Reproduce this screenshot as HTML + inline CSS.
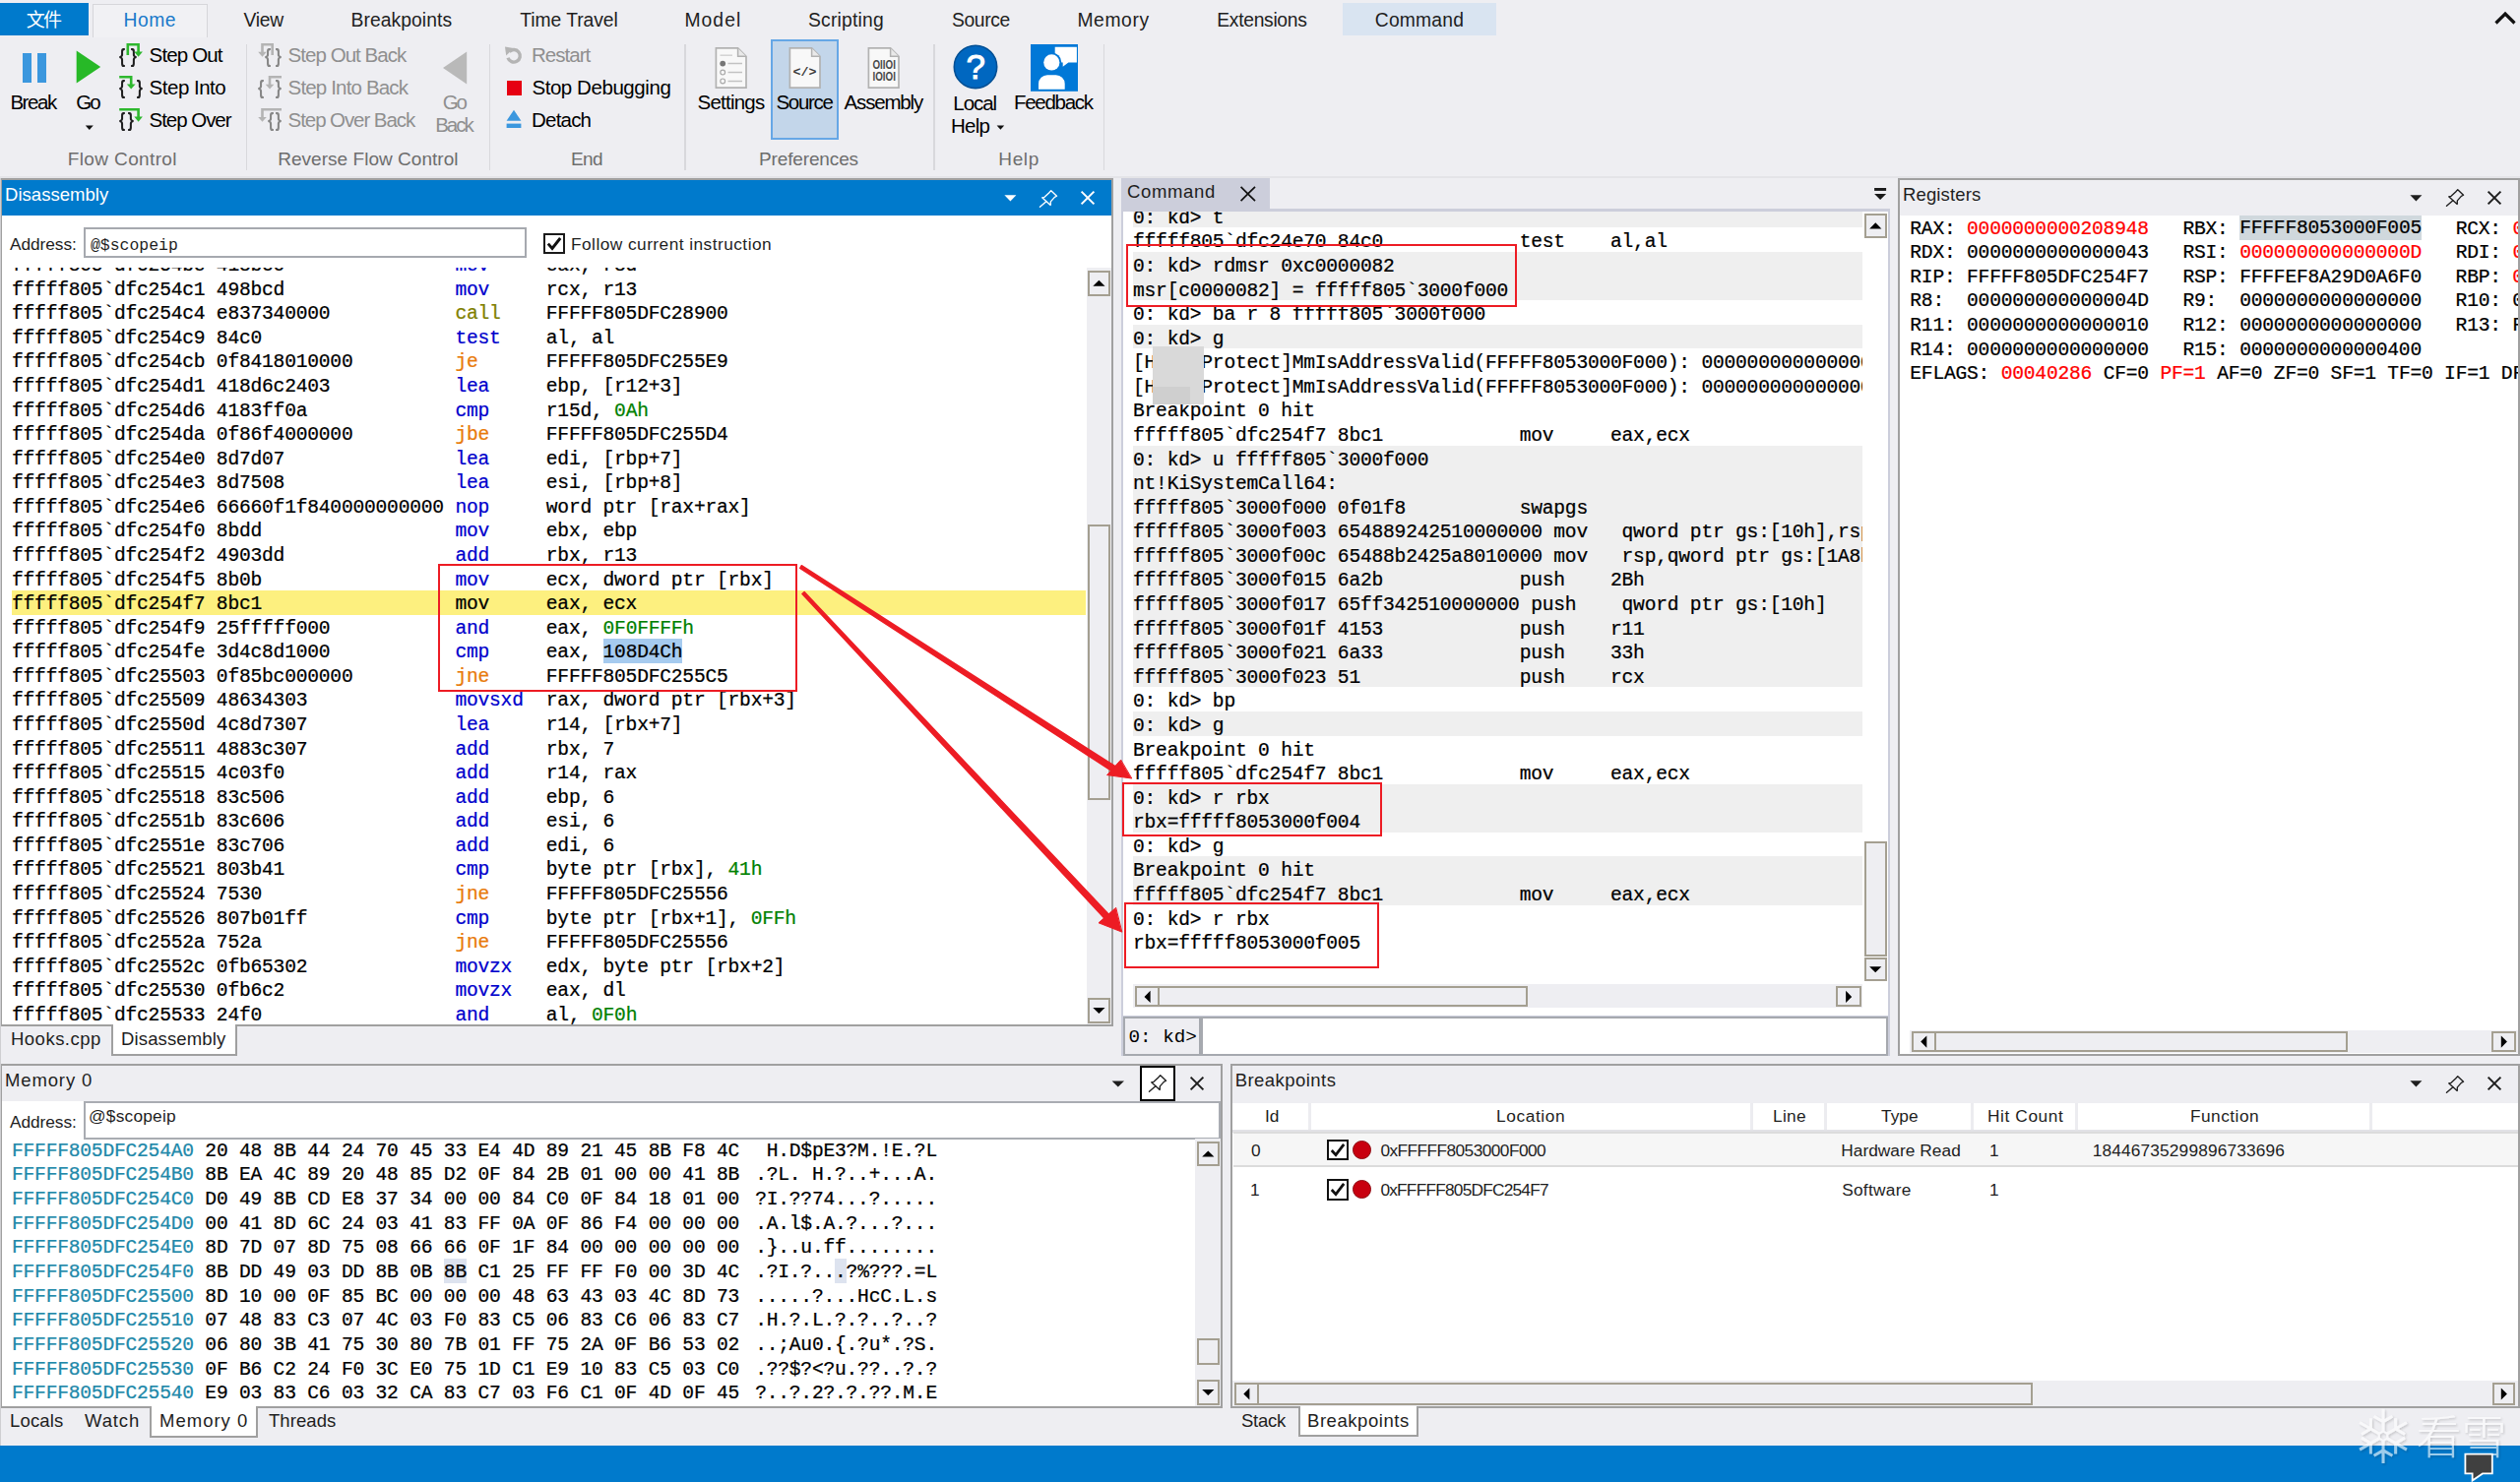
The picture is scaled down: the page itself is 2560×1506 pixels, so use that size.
<!DOCTYPE html>
<html lang="en"><head><meta charset="utf-8"><title>WinDbg</title>
<style>
html,body{margin:0;padding:0;background:#eeeef2;}
#app{position:relative;width:2560px;height:1506px;overflow:hidden;font-family:"Liberation Sans","Noto Sans CJK SC",sans-serif;}
#app div,#app svg{position:absolute;}
.t{white-space:pre;}
.s{font-family:"Liberation Sans","Noto Sans CJK SC",sans-serif;}
.m{font-family:"Liberation Mono",monospace;}
.code{font-family:"Liberation Mono",monospace;font-size:19.6px;letter-spacing:-0.210px;color:#000;-webkit-text-stroke:0.24px currentColor;}
.code .r{left:0;right:0;height:24.57px;line-height:30.97px;white-space:pre;}
.code b{font-weight:400;}
.code i,.code u{font-style:normal;text-decoration:none;}
.b{color:#0000cc;} .c{color:#808000;} .j{color:#e87a0a;} .k{color:#000;}
.code i{color:#008000;}
.code u{background:#a6cbef;padding:3.2px 0 0;}
.dis .r{line-height:28.97px;}
.hl{background:#fdf07f;}
.g{background:#efefef;}
.reg i{color:#ff0000;}
.mem .a{color:#2088a9;}
.mem u{background:#dde3ef;padding:2.7px 0 0;}
.reg u{background:#d0d8dd;}
.mem .asc{position:relative;left:4.5px;}
</style></head>
<body><div id="app">
<div style="left:0.00px;top:0.00px;width:2560.00px;height:1506.00px;background:#eeeef2;"></div>
<div style="left:0.00px;top:3.00px;width:90.00px;height:33.00px;background:#007acc;"></div>
<div class="t s" style="left:26.70px;top:8.12px;font-size:19px;line-height:25px;color:#fff;letter-spacing:-1.700px;">文件</div>
<div style="left:94.00px;top:3.50px;width:116.50px;height:34.20px;background:#f1f1f4;border:1px solid #d6d6da;border-bottom:none;box-sizing:border-box;"></div>
<div style="left:1363.80px;top:3.00px;width:156.00px;height:32.50px;background:#d9e4f1;"></div>
<div class="t s" style="left:125.50px;top:7.71px;font-size:19.3px;line-height:25px;color:#1979ca;letter-spacing:0.530px;">Home</div>
<div class="t s" style="left:247.60px;top:7.71px;font-size:19.3px;line-height:25px;color:#1e1e1e;letter-spacing:-0.273px;">View</div>
<div class="t s" style="left:356.60px;top:7.71px;font-size:19.3px;line-height:25px;color:#1e1e1e;letter-spacing:0.062px;">Breakpoints</div>
<div class="t s" style="left:528.30px;top:7.71px;font-size:19.3px;line-height:25px;color:#1e1e1e;letter-spacing:-0.056px;">Time Travel</div>
<div class="t s" style="left:695.40px;top:7.71px;font-size:19.3px;line-height:25px;color:#1e1e1e;letter-spacing:1.092px;">Model</div>
<div class="t s" style="left:821.00px;top:7.71px;font-size:19.3px;line-height:25px;color:#1e1e1e;letter-spacing:0.213px;">Scripting</div>
<div class="t s" style="left:967.00px;top:7.71px;font-size:19.3px;line-height:25px;color:#1e1e1e;letter-spacing:-0.374px;">Source</div>
<div class="t s" style="left:1094.40px;top:7.71px;font-size:19.3px;line-height:25px;color:#1e1e1e;letter-spacing:0.622px;">Memory</div>
<div class="t s" style="left:1236.30px;top:7.71px;font-size:19.3px;line-height:25px;color:#1e1e1e;letter-spacing:-0.308px;">Extensions</div>
<div class="t s" style="left:1396.80px;top:7.71px;font-size:19.3px;line-height:25px;color:#1e1e1e;letter-spacing:0.197px;">Command</div>
<svg style="left:2532px;top:10px" width="26" height="18" viewBox="0 0 26 18"><path d="M3.5 13.5 L13 4 L22.5 13.5" fill="none" stroke="#111" stroke-width="3.2"/></svg>
<div style="left:22.90px;top:54.00px;width:8.90px;height:29.80px;background:#3b97de;"></div>
<div style="left:38.10px;top:54.00px;width:8.90px;height:29.80px;background:#3b97de;"></div>
<div class="t s" style="left:10.40px;top:90.40px;font-size:20.5px;line-height:27px;color:#000;letter-spacing:-1.451px;">Break</div>
<svg style="left:76px;top:50px" width="30" height="38" viewBox="0 0 30 38"><path d="M1.7 1.4 L26.2 17.9 L1.7 34.4 Z" fill="#27b927"/></svg>
<div class="t s" style="left:77.20px;top:90.40px;font-size:20.5px;line-height:27px;color:#000;letter-spacing:-1.946px;">Go</div>
<svg style="left:86px;top:127px" width="10" height="6"><path d="M0.8 0.5 H8.8 L4.8 5 Z" fill="#111"/></svg>
<div class="t s" style="left:121.30px;top:43.53px;font-size:20.4px;line-height:26px;color:#1e1e1e;font-weight:700;transform:scaleX(.78);transform-origin:-0.00px 50%">{</div>
<div class="t s" style="left:130.70px;top:43.53px;font-size:20.4px;line-height:26px;color:#1e1e1e;font-weight:700;transform:scaleX(.78);transform-origin:8.00px 50%">}</div>
<svg style="left:120px;top:42px" width="28" height="20" viewBox="0 0 28 20"><path d="M9.8 14 V3.3 H20.6 V11" fill="none" stroke="#2eb82e" stroke-width="2.6"/><path d="M16.3 10.6 H24.9 L20.6 15.8 Z" fill="#2eb82e"/></svg>
<div class="t s" style="left:151.60px;top:42.10px;font-size:20.5px;line-height:27px;color:#000;letter-spacing:-0.859px;">Step Out</div>
<div class="t s" style="left:121.30px;top:76.33px;font-size:20.4px;line-height:26px;color:#1e1e1e;font-weight:700;transform:scaleX(.78);transform-origin:-0.00px 50%">{</div>
<div class="t s" style="left:137.00px;top:76.33px;font-size:20.4px;line-height:26px;color:#1e1e1e;font-weight:700;transform:scaleX(.78);transform-origin:8.00px 50%">}</div>
<svg style="left:120px;top:75px" width="28" height="20" viewBox="0 0 28 20"><path d="M1.2 3.3 H13.2 V11" fill="none" stroke="#2eb82e" stroke-width="2.6"/><path d="M8.8 10.4 H17.6 L13.2 15.5 Z" fill="#2eb82e"/></svg>
<div class="t s" style="left:151.60px;top:75.10px;font-size:20.5px;line-height:27px;color:#000;letter-spacing:-0.495px;">Step Into</div>
<div class="t s" style="left:121.30px;top:109.43px;font-size:20.4px;line-height:26px;color:#1e1e1e;font-weight:700;transform:scaleX(.78);transform-origin:-0.00px 50%">{</div>
<div class="t s" style="left:127.60px;top:109.43px;font-size:20.4px;line-height:26px;color:#1e1e1e;font-weight:700;transform:scaleX(.78);transform-origin:8.00px 50%">}</div>
<svg style="left:120px;top:108px" width="28" height="20" viewBox="0 0 28 20"><path d="M1.2 3.3 H20.6 V11" fill="none" stroke="#2eb82e" stroke-width="2.6"/><path d="M16.3 10.6 H24.9 L20.6 15.7 Z" fill="#2eb82e"/></svg>
<div class="t s" style="left:151.60px;top:108.20px;font-size:20.5px;line-height:27px;color:#000;letter-spacing:-1.045px;">Step Over</div>
<div class="t s" style="left:68.80px;top:149.32px;font-size:19px;line-height:25px;color:#6d6d6d;letter-spacing:0.371px;">Flow Control</div>
<div style="left:249.60px;top:44.50px;width:1.30px;height:128.00px;background:#d8d8dc;"></div>
<div class="t s" style="left:268.60px;top:43.53px;font-size:20.4px;line-height:26px;color:#868686;font-weight:700;transform:scaleX(.78);transform-origin:-0.00px 50%">{</div>
<div class="t s" style="left:277.80px;top:43.53px;font-size:20.4px;line-height:26px;color:#868686;font-weight:700;transform:scaleX(.78);transform-origin:8.00px 50%">}</div>
<svg style="left:261px;top:42px" width="28" height="20" viewBox="0 0 28 20"><path d="M15.7 14 V3.3 H5.5 V11" fill="none" stroke="#b4b4b4" stroke-width="2.6"/><path d="M1.2 10.8 H9.8 L5.5 15.8 Z" fill="#b4b4b4"/></svg>
<div class="t s" style="left:292.60px;top:42.10px;font-size:20.5px;line-height:27px;color:#8f8f8f;letter-spacing:-0.961px;">Step Out Back</div>
<div class="t s" style="left:262.20px;top:76.33px;font-size:20.4px;line-height:26px;color:#868686;font-weight:700;transform:scaleX(.78);transform-origin:-0.00px 50%">{</div>
<div class="t s" style="left:277.80px;top:76.33px;font-size:20.4px;line-height:26px;color:#868686;font-weight:700;transform:scaleX(.78);transform-origin:8.00px 50%">}</div>
<svg style="left:261px;top:75px" width="28" height="20" viewBox="0 0 28 20"><path d="M25 3.3 H13 V11" fill="none" stroke="#b4b4b4" stroke-width="2.6"/><path d="M8.7 10.8 H17.4 L13 15.6 Z" fill="#b4b4b4"/></svg>
<div class="t s" style="left:292.60px;top:75.10px;font-size:20.5px;line-height:27px;color:#8f8f8f;letter-spacing:-0.845px;">Step Into Back</div>
<div class="t s" style="left:272.00px;top:109.43px;font-size:20.4px;line-height:26px;color:#868686;font-weight:700;transform:scaleX(.78);transform-origin:-0.00px 50%">{</div>
<div class="t s" style="left:277.80px;top:109.43px;font-size:20.4px;line-height:26px;color:#868686;font-weight:700;transform:scaleX(.78);transform-origin:8.00px 50%">}</div>
<svg style="left:261px;top:108px" width="28" height="20" viewBox="0 0 28 20"><path d="M25 3.3 H5.5 V11" fill="none" stroke="#b4b4b4" stroke-width="2.6"/><path d="M1.2 11 H9.8 L5.5 15.8 Z" fill="#b4b4b4"/></svg>
<div class="t s" style="left:292.60px;top:108.20px;font-size:20.5px;line-height:27px;color:#8f8f8f;letter-spacing:-1.078px;">Step Over Back</div>
<svg style="left:448px;top:50px" width="30" height="38" viewBox="0 0 30 38"><path d="M26.2 2.6 L2 19 L26.2 35.6 Z" fill="#b9b9b9"/></svg>
<div class="t s" style="left:449.80px;top:90.40px;font-size:20.5px;line-height:27px;color:#8f8f8f;letter-spacing:-2.346px;">Go</div>
<div class="t s" style="left:442.20px;top:113.20px;font-size:20.5px;line-height:27px;color:#8f8f8f;letter-spacing:-2.008px;">Back</div>
<div class="t s" style="left:282.20px;top:149.32px;font-size:19px;line-height:25px;color:#6d6d6d;letter-spacing:0.034px;">Reverse Flow Control</div>
<div style="left:497.20px;top:44.50px;width:1.30px;height:128.00px;background:#d8d8dc;"></div>
<svg style="left:511px;top:45px" width="22" height="22" viewBox="0 0 22 22"><path d="M6.3 7.6 A6.3 6.3 0 1 1 5 13.8" fill="none" stroke="#b4b4b4" stroke-width="3.4"/><path d="M2 2.6 L10.8 4 L3.2 11.4 Z" fill="#b4b4b4"/></svg>
<div class="t s" style="left:540.00px;top:42.10px;font-size:20.5px;line-height:27px;color:#8f8f8f;letter-spacing:-0.963px;">Restart</div>
<div style="left:514.60px;top:81.60px;width:15.00px;height:15.20px;background:#e60012;"></div>
<div class="t s" style="left:540.40px;top:75.10px;font-size:20.5px;line-height:27px;color:#000;letter-spacing:-0.433px;">Stop Debugging</div>
<svg style="left:513px;top:110px" width="18" height="22" viewBox="0 0 18 22"><path d="M9 1.8 L16.4 12.8 H1.6 Z" fill="#3b97de"/><rect x="1.6" y="15.6" width="14.8" height="4.4" fill="#3b97de"/></svg>
<div class="t s" style="left:540.00px;top:108.20px;font-size:20.5px;line-height:27px;color:#000;letter-spacing:-0.790px;">Detach</div>
<div class="t s" style="left:580.00px;top:149.32px;font-size:19px;line-height:25px;color:#6d6d6d;letter-spacing:-0.620px;">End</div>
<div style="left:695.30px;top:44.50px;width:1.30px;height:128.00px;background:#d8d8dc;"></div>
<div style="left:783.00px;top:40.10px;width:69.00px;height:101.60px;background:#c3d6ea;border:2px solid #66a7e6;box-sizing:border-box;"></div>
<svg style="left:725.6px;top:47px" width="34" height="44" viewBox="0 0 34 44"><path d="M1.4 1.9 H23.6 L32 10.3 V42.2 H1.4 Z" fill="#f8f8f8" stroke="#b2b2b2" stroke-width="1.7"/><path d="M23.6 1.9 V10.3 H32" fill="#e9e9e9" stroke="#b2b2b2" stroke-width="1.5"/><path d="M5.5 9.2 H18" stroke="#d0d0d0" stroke-width="1.4"/><circle cx="8.2" cy="17.6" r="2.9" fill="#777"/><circle cx="8.2" cy="26.6" r="2.4" fill="none" stroke="#aaa" stroke-width="1.2"/><circle cx="8.2" cy="35.4" r="2.4" fill="none" stroke="#aaa" stroke-width="1.2"/><path d="M13.5 17.6 H28 M13.5 26.6 H28 M13.5 35.4 H28" stroke="#c2c2c2" stroke-width="1.5"/></svg>
<div class="t s" style="left:708.60px;top:90.40px;font-size:20.5px;line-height:27px;color:#000;letter-spacing:-0.775px;">Settings</div>
<svg style="left:801px;top:47px" width="34" height="44" viewBox="0 0 34 44"><path d="M1.4 1.9 H23.6 L32 10.3 V42.2 H1.4 Z" fill="#f8f8f8" stroke="#b2b2b2" stroke-width="1.7"/><path d="M23.6 1.9 V10.3 H32" fill="#e9e9e9" stroke="#b2b2b2" stroke-width="1.5"/><text x="16.6" y="29.5" font-size="12.8" font-weight="700" text-anchor="middle" fill="#3c3c3c" font-family="Liberation Mono,monospace" textLength="24" lengthAdjust="spacingAndGlyphs">&lt;/&gt;</text></svg>
<div class="t s" style="left:788.50px;top:90.40px;font-size:20.5px;line-height:27px;color:#000;letter-spacing:-1.330px;">Source</div>
<svg style="left:880.6px;top:47px" width="34" height="44" viewBox="0 0 34 44"><path d="M1.4 1.9 H23.6 L32 10.3 V42.2 H1.4 Z" fill="#f8f8f8" stroke="#b2b2b2" stroke-width="1.7"/><path d="M23.6 1.9 V10.3 H32" fill="#e9e9e9" stroke="#b2b2b2" stroke-width="1.5"/><text x="17.2" y="22.6" font-size="12" font-weight="700" text-anchor="middle" fill="#4a4a4a" font-family="Liberation Sans,sans-serif" textLength="23.4" lengthAdjust="spacingAndGlyphs">OIIOI</text><text x="17.2" y="34.8" font-size="12" font-weight="700" text-anchor="middle" fill="#4a4a4a" font-family="Liberation Sans,sans-serif" textLength="23.4" lengthAdjust="spacingAndGlyphs">IOIOI</text></svg>
<div class="t s" style="left:857.60px;top:90.40px;font-size:20.5px;line-height:27px;color:#000;letter-spacing:-1.187px;">Assembly</div>
<div class="t s" style="left:771.00px;top:149.32px;font-size:19px;line-height:25px;color:#6d6d6d;letter-spacing:-0.134px;">Preferences</div>
<div style="left:948.40px;top:44.50px;width:1.30px;height:128.00px;background:#d8d8dc;"></div>
<svg style="left:967px;top:44px" width="48" height="48" viewBox="0 0 48 48"><circle cx="24" cy="23.9" r="21.7" fill="#0067c0" stroke="#004f94" stroke-width="1.6"/><text x="24.3" y="36.4" font-size="35" text-anchor="middle" fill="#fff" stroke="#fff" stroke-width=".9" font-family="Liberation Sans,sans-serif">?</text></svg>
<div class="t s" style="left:968.30px;top:91.10px;font-size:20.5px;line-height:27px;color:#000;letter-spacing:-1.063px;">Local</div>
<div class="t s" style="left:966.00px;top:113.90px;font-size:20.5px;line-height:27px;color:#000;letter-spacing:-0.720px;">Help</div>
<svg style="left:1011.5px;top:127px" width="10" height="6"><path d="M0.6 0.5 H8.2 L4.4 4.8 Z" fill="#111"/></svg>
<svg style="left:1047px;top:45.2px" width="48" height="48" viewBox="0 0 48 48"><rect width="48" height="47.8" fill="#0078d7"/><path d="M24.7 2.7 H46.9 V18.4 H38.4 L32.7 22.8 V18.4 H24.7 Z" fill="#fff"/><circle cx="21.3" cy="18.4" r="10" fill="#0078d7"/><circle cx="21.3" cy="18.4" r="8.1" fill="#fff"/><path d="M8 45.7 V40 A9 9 0 0 1 17 31.2 H25.7 A9 9 0 0 1 34.7 40 V45.7 Z" fill="#fff"/></svg>
<div class="t s" style="left:1030.00px;top:90.40px;font-size:20.5px;line-height:27px;color:#000;letter-spacing:-1.283px;">Feedback</div>
<div class="t s" style="left:1014.30px;top:149.32px;font-size:19px;line-height:25px;color:#6d6d6d;letter-spacing:0.630px;">Help</div>
<div style="left:1121.10px;top:44.50px;width:1.30px;height:128.00px;background:#d8d8dc;"></div>
<div style="left:0.00px;top:179.40px;width:2560.00px;height:2.00px;background:#e4e4e8;"></div>
<div style="left:0.00px;top:181.30px;width:1.00px;height:1288.00px;background:#cfcfd2;"></div>
<div style="left:1.00px;top:181.30px;width:1130.00px;height:862.00px;background:#a0a0a0;"></div>
<div style="left:2.00px;top:183.00px;width:1127.00px;height:858.30px;background:#fff;"></div>
<div style="left:2.00px;top:183.00px;width:1127.30px;height:35.80px;background:#007acc;"></div>
<div class="t s" style="left:5.00px;top:185.59px;font-size:18.5px;line-height:24px;color:#fff;letter-spacing:0.039px;">Disassembly</div>
<svg style="left:1018.5px;top:197px" width="16" height="10"><path d="M1.4 1.2 H13.4 L7.4 7.4 Z" fill="#fff"/></svg>
<svg style="left:1052.90px;top:189.75px" width="24" height="24" viewBox="-12 -12 24 24"><g fill="none" stroke="#fff" stroke-width="1.35" stroke-linejoin="round" stroke-linecap="round"><path d="M2.75 -8.35 L8.55 -2.75 L6.35 -1.65 L2.35 2.85 L2.15 6.45 L-6.35 -1.15 L-3.95 -1.65 L0.65 -5.95 Z"/><path d="M-2.15 2.65 L-8.55 8.35"/></g></svg>
<svg style="left:1096.6px;top:193px" width="16" height="16"><path d="M1.6 1.6 L14.4 14.4 M14.4 1.6 L1.6 14.4" stroke="#fff" stroke-width="2" fill="none"/></svg>
<div class="t s" style="left:10.00px;top:236.81px;font-size:17.3px;line-height:22px;color:#1e1e1e;letter-spacing:-0.057px;">Address:</div>
<div style="left:85.00px;top:231.20px;width:450.00px;height:30.80px;background:#fff;border:2px solid #a6a9af;box-sizing:border-box;"></div>
<div class="t m" style="left:92.00px;top:238.72px;font-size:16.45px;line-height:21px;color:#1e1e1e;">@$scopeip</div>
<div style="left:552.20px;top:237.30px;width:21.60px;height:20.60px;background:#fff;border:2px solid #1a1a1a;box-sizing:border-box;"><svg style="left:-2px;top:-2px" width="21.6" height="20.6"><path d="M4.8 10.6 L9 15.4 L17.2 5" fill="none" stroke="#111" stroke-width="2.9"/></svg></div>
<div class="t s" style="left:580.00px;top:236.81px;font-size:17.3px;line-height:22px;color:#1e1e1e;letter-spacing:0.461px;">Follow current instruction</div>
<div style="left:2.00px;top:272.00px;width:1101.50px;height:769.30px;background:#fff;overflow:hidden;"><div class="code dis" style="left:10.0px;top:0;width:1091.4px"><div class="r" style="top:-15.87px">fffff805`dfc254be 418bc0               <b class="b">mov     </b>eax, r8d</div><div class="r" style="top:8.70px">fffff805`dfc254c1 498bcd               <b class="b">mov     </b>rcx, r13</div><div class="r" style="top:33.27px">fffff805`dfc254c4 e837340000           <b class="c">call    </b>FFFFF805DFC28900</div><div class="r" style="top:57.84px">fffff805`dfc254c9 84c0                 <b class="b">test    </b>al, al</div><div class="r" style="top:82.41px">fffff805`dfc254cb 0f8418010000         <b class="j">je      </b>FFFFF805DFC255E9</div><div class="r" style="top:106.98px">fffff805`dfc254d1 418d6c2403           <b class="b">lea     </b>ebp, [r12+3]</div><div class="r" style="top:131.55px">fffff805`dfc254d6 4183ff0a             <b class="b">cmp     </b>r15d, <i>0Ah</i></div><div class="r" style="top:156.12px">fffff805`dfc254da 0f86f4000000         <b class="j">jbe     </b>FFFFF805DFC255D4</div><div class="r" style="top:180.69px">fffff805`dfc254e0 8d7d07               <b class="b">lea     </b>edi, [rbp+7]</div><div class="r" style="top:205.26px">fffff805`dfc254e3 8d7508               <b class="b">lea     </b>esi, [rbp+8]</div><div class="r" style="top:229.83px">fffff805`dfc254e6 66660f1f840000000000 <b class="b">nop     </b>word ptr [rax+rax]</div><div class="r" style="top:254.40px">fffff805`dfc254f0 8bdd                 <b class="b">mov     </b>ebx, ebp</div><div class="r" style="top:278.97px">fffff805`dfc254f2 4903dd               <b class="b">add     </b>rbx, r13</div><div class="r" style="top:303.54px">fffff805`dfc254f5 8b0b                 <b class="b">mov     </b>ecx, dword ptr [rbx]</div><div class="r hl" style="top:328.11px">fffff805`dfc254f7 8bc1                 <b class="k">mov     </b>eax, ecx</div><div class="r" style="top:352.68px">fffff805`dfc254f9 25fffff000           <b class="b">and     </b>eax, <i>0F0FFFFh</i></div><div class="r" style="top:377.25px">fffff805`dfc254fe 3d4c8d1000           <b class="b">cmp     </b>eax, <u>108D4Ch</u></div><div class="r" style="top:401.82px">fffff805`dfc25503 0f85bc000000         <b class="j">jne     </b>FFFFF805DFC255C5</div><div class="r" style="top:426.39px">fffff805`dfc25509 48634303             <b class="b">movsxd  </b>rax, dword ptr [rbx+3]</div><div class="r" style="top:450.96px">fffff805`dfc2550d 4c8d7307             <b class="b">lea     </b>r14, [rbx+7]</div><div class="r" style="top:475.53px">fffff805`dfc25511 4883c307             <b class="b">add     </b>rbx, 7</div><div class="r" style="top:500.10px">fffff805`dfc25515 4c03f0               <b class="b">add     </b>r14, rax</div><div class="r" style="top:524.67px">fffff805`dfc25518 83c506               <b class="b">add     </b>ebp, 6</div><div class="r" style="top:549.24px">fffff805`dfc2551b 83c606               <b class="b">add     </b>esi, 6</div><div class="r" style="top:573.81px">fffff805`dfc2551e 83c706               <b class="b">add     </b>edi, 6</div><div class="r" style="top:598.38px">fffff805`dfc25521 803b41               <b class="b">cmp     </b>byte ptr [rbx], <i>41h</i></div><div class="r" style="top:622.95px">fffff805`dfc25524 7530                 <b class="j">jne     </b>FFFFF805DFC25556</div><div class="r" style="top:647.52px">fffff805`dfc25526 807b01ff             <b class="b">cmp     </b>byte ptr [rbx+1], <i>0FFh</i></div><div class="r" style="top:672.09px">fffff805`dfc2552a 752a                 <b class="j">jne     </b>FFFFF805DFC25556</div><div class="r" style="top:696.66px">fffff805`dfc2552c 0fb65302             <b class="b">movzx   </b>edx, byte ptr [rbx+2]</div><div class="r" style="top:721.23px">fffff805`dfc25530 0fb6c2               <b class="b">movzx   </b>eax, dl</div><div class="r" style="top:745.80px">fffff805`dfc25533 24f0                 <b class="b">and     </b>al, <i>0F0h</i></div></div></div>
<div style="left:1103.50px;top:272.00px;width:25.80px;height:769.30px;background:#eeeef2;"></div>
<div style="left:1105.00px;top:275.30px;width:22.80px;height:25.50px;background:#eeeef2;border:2px solid #a49f91;box-sizing:border-box;"><svg style="left:-2px;top:-2px" width="22.8" height="25.5"><path d="M5.300000000000001 15.75 H17.5 L11.4 9.65 Z" fill="#000"/></svg></div>
<div style="left:1105.00px;top:533.00px;width:22.60px;height:280.00px;background:#eeeef2;border:2px solid #a49f91;box-sizing:border-box;"></div>
<div style="left:1105.00px;top:1014.00px;width:22.80px;height:26.00px;background:#eeeef2;border:2px solid #a49f91;box-sizing:border-box;"><svg style="left:-2px;top:-2px" width="22.8" height="26"><path d="M5.300000000000001 10.0 H17.5 L11.4 16.1 Z" fill="#000"/></svg></div>
<div class="t s" style="left:11.00px;top:1043.59px;font-size:18.5px;line-height:24px;color:#1e1e1e;letter-spacing:0.485px;">Hooks.cpp</div>
<div style="left:113.00px;top:1041.00px;width:128.00px;height:32.30px;background:#fff;border:2px solid #a0a0a0;border-top:none;box-sizing:border-box;"></div>
<div class="t s" style="left:123.00px;top:1043.59px;font-size:18.5px;line-height:24px;color:#1e1e1e;letter-spacing:0.139px;">Disassembly</div>
<div style="left:1139.00px;top:181.30px;width:151.00px;height:30.50px;background:#cccedb;"></div>
<div style="left:1139.00px;top:211.70px;width:781.00px;height:3.00px;background:#cccedb;"></div>
<div style="left:1139.00px;top:214.70px;width:781.00px;height:858.50px;background:#cccedb;"></div>
<div style="left:1141.00px;top:214.70px;width:777.00px;height:817.50px;background:#fff;"></div>
<div class="t s" style="left:1145.00px;top:183.39px;font-size:18.5px;line-height:24px;color:#1e1e1e;letter-spacing:0.659px;">Command</div>
<svg style="left:1259px;top:188px" width="18" height="18"><path d="M1.6 1.8 L16 16.2 M16 1.8 L1.6 16.2" stroke="#111" stroke-width="1.7" fill="none"/></svg>
<svg style="left:1903px;top:190px" width="16" height="14"><rect x="1.1" y="1" width="12" height="2.9" fill="#1a1a1a"/><path d="M1.1 7.1 H13.1 L7.1 13 Z" fill="#1a1a1a"/></svg>
<div style="left:1151.00px;top:214.70px;width:741.00px;height:785.00px;background:#fff;overflow:hidden;"><div class="code" style="left:0;top:0;width:741px"><div class="r g" style="top:-7.90px">0: kd&gt; t</div><div class="r" style="top:16.68px">fffff805`dfc24e70 84c0            test    al,al</div><div class="r g" style="top:41.26px">0: kd&gt; rdmsr 0xc0000082</div><div class="r g" style="top:65.84px">msr[c0000082] = fffff805`3000f000</div><div class="r" style="top:90.42px">0: kd&gt; ba r 8 fffff805`3000f000</div><div class="r g" style="top:115.00px">0: kd&gt; g</div><div class="r" style="top:139.58px">[H    Protect]MmIsAddressValid(FFFFF8053000F000): 0000000000000001</div><div class="r" style="top:164.16px">[H    Protect]MmIsAddressValid(FFFFF8053000F000): 0000000000000001</div><div class="r" style="top:188.74px">Breakpoint 0 hit</div><div class="r" style="top:213.32px">fffff805`dfc254f7 8bc1            mov     eax,ecx</div><div class="r g" style="top:237.90px">0: kd&gt; u fffff805`3000f000</div><div class="r g" style="top:262.48px">nt!KiSystemCall64:</div><div class="r g" style="top:287.06px">fffff805`3000f000 0f01f8          swapgs</div><div class="r g" style="top:311.64px">fffff805`3000f003 654889242510000000 mov   qword ptr gs:[10h],rsp</div><div class="r g" style="top:336.22px">fffff805`3000f00c 65488b2425a8010000 mov   rsp,qword ptr gs:[1A8h]</div><div class="r g" style="top:360.80px">fffff805`3000f015 6a2b            push    2Bh</div><div class="r g" style="top:385.38px">fffff805`3000f017 65ff342510000000 push    qword ptr gs:[10h]</div><div class="r g" style="top:409.96px">fffff805`3000f01f 4153            push    r11</div><div class="r g" style="top:434.54px">fffff805`3000f021 6a33            push    33h</div><div class="r g" style="top:459.12px">fffff805`3000f023 51              push    rcx</div><div class="r" style="top:483.70px">0: kd&gt; bp</div><div class="r g" style="top:508.28px">0: kd&gt; g</div><div class="r" style="top:532.86px">Breakpoint 0 hit</div><div class="r" style="top:557.44px">fffff805`dfc254f7 8bc1            mov     eax,ecx</div><div class="r g" style="top:582.02px">0: kd&gt; r rbx</div><div class="r g" style="top:606.60px">rbx=fffff8053000f004</div><div class="r" style="top:631.18px">0: kd&gt; g</div><div class="r g" style="top:655.76px">Breakpoint 0 hit</div><div class="r g" style="top:680.34px">fffff805`dfc254f7 8bc1            mov     eax,ecx</div><div class="r" style="top:704.92px">0: kd&gt; r rbx</div><div class="r" style="top:729.50px">rbx=fffff8053000f005</div></div></div>
<div style="left:1171.30px;top:352.40px;width:51.40px;height:58.60px;background:#d9d9d9;"></div>
<div style="left:1171.30px;top:392.70px;width:37.70px;height:18.30px;background:#cfcfcf;"></div>
<div style="left:1892.00px;top:214.70px;width:25.00px;height:785.00px;background:#fff;"></div>
<div style="left:1894.40px;top:217.00px;width:22.60px;height:24.80px;background:#eeeef2;border:2px solid #a49f91;box-sizing:border-box;"><svg style="left:-2px;top:-2px" width="22.6" height="24.8"><path d="M5.200000000000001 15.4 H17.4 L11.3 9.3 Z" fill="#000"/></svg></div>
<div style="left:1894.40px;top:854.60px;width:22.40px;height:117.60px;background:#eeeef2;border:2px solid #a49f91;box-sizing:border-box;"></div>
<div style="left:1894.40px;top:972.60px;width:22.40px;height:24.40px;background:#eeeef2;border:2px solid #a49f91;box-sizing:border-box;"><svg style="left:-2px;top:-2px" width="22.4" height="24.4"><path d="M5.1 9.2 H17.299999999999997 L11.2 15.299999999999999 Z" fill="#000"/></svg></div>
<div style="left:1151.00px;top:999.70px;width:741.00px;height:24.70px;background:#eeeef2;"></div>
<div style="left:1153.00px;top:1001.60px;width:25.40px;height:21.80px;background:#eeeef2;border:2px solid #a49f91;box-sizing:border-box;"><svg style="left:-2px;top:-2px" width="25.4" height="21.8"><path d="M15.6 4.800000000000001 V17.0 L9.5 10.9 Z" fill="#000"/></svg></div>
<div style="left:1176.40px;top:1001.60px;width:375.40px;height:21.80px;background:#eeeef2;border:2px solid #a49f91;box-sizing:border-box;"></div>
<div style="left:1865.00px;top:1001.60px;width:26.00px;height:21.80px;background:#eeeef2;border:2px solid #a49f91;box-sizing:border-box;"><svg style="left:-2px;top:-2px" width="26" height="21.8"><path d="M10.1 4.800000000000001 V17.0 L16.2 10.9 Z" fill="#000"/></svg></div>
<div style="left:1141.00px;top:1033.00px;width:777.20px;height:39.70px;background:#a6a9af;"></div>
<div style="left:1143.00px;top:1035.20px;width:75.30px;height:35.60px;background:#eeeef2;"></div>
<div style="left:1221.90px;top:1035.20px;width:694.20px;height:35.60px;background:#fff;"></div>
<div class="t m" style="left:1146.50px;top:1042.38px;font-size:19.25px;line-height:25px;color:#000;">0: kd&gt;</div>
<div style="left:445.10px;top:573.00px;width:365.10px;height:129.90px;border:2px solid #ed1c24;box-sizing:border-box;"></div>
<div style="left:1144.20px;top:247.60px;width:396.60px;height:64.00px;border:2px solid #ed1c24;box-sizing:border-box;"></div>
<div style="left:1140.10px;top:795.10px;width:263.80px;height:54.80px;border:2px solid #ed1c24;box-sizing:border-box;"></div>
<div style="left:1142.10px;top:917.40px;width:259.20px;height:66.50px;border:2px solid #ed1c24;box-sizing:border-box;"></div>
<svg style="left:0;top:0" width="2560" height="1506" viewBox="0 0 2560 1506"><g stroke="#ed1c24" stroke-linecap="round" fill="#ed1c24"><path d="M814.3 574.7 L812.7 577.3 L1132 785.2 L1135.2 780.2 Z" stroke-width="1.4" stroke-linejoin="round"/><path d="M1149.4 791 L1124.6 787.6 L1138.4 772.4 Z" stroke-width="1"/><path d="M817.1 601.5 L814.9 603.5 L1123.2 934.6 L1127.6 930.4 Z" stroke-width="1.4" stroke-linejoin="round"/><path d="M1139.5 947 L1116 937.8 L1133.4 922.6 Z" stroke-width="1"/></g></svg>
<div style="left:1927.50px;top:181.30px;width:632.50px;height:892.00px;background:#a0a0a0;"></div>
<div style="left:1929.50px;top:183.00px;width:628.50px;height:888.30px;background:#fff;"></div>
<div style="left:1929.50px;top:183.00px;width:628.50px;height:35.80px;background:#eeeef2;"></div>
<div class="t s" style="left:1933.00px;top:185.59px;font-size:18.5px;line-height:24px;color:#1e1e1e;letter-spacing:0.139px;">Registers</div>
<svg style="left:2446.8px;top:196.6px" width="16" height="10"><path d="M1.4 1.2 H13.4 L7.4 7.4 Z" fill="#1e1e1e"/></svg>
<svg style="left:2481.90px;top:189.35px" width="24" height="24" viewBox="-12 -12 24 24"><g fill="none" stroke="#1e1e1e" stroke-width="1.35" stroke-linejoin="round" stroke-linecap="round"><path d="M2.75 -8.35 L8.55 -2.75 L6.35 -1.65 L2.35 2.85 L2.15 6.45 L-6.35 -1.15 L-3.95 -1.65 L0.65 -5.95 Z"/><path d="M-2.15 2.65 L-8.55 8.35"/></g></svg>
<svg style="left:2525.8px;top:192.6px" width="16" height="16"><path d="M1.6 1.6 L14.4 14.4 M14.4 1.6 L1.6 14.4" stroke="#1e1e1e" stroke-width="2" fill="none"/></svg>
<div style="left:1929.50px;top:218.80px;width:628.50px;height:828.00px;background:#fff;overflow:hidden;"><div class="code reg" style="left:10.8px;top:0;width:800px"><div class="r" style="top:-1.30px">RAX: <i>0000000000208948</i>   RBX: <u>FFFFF8053000F005</u>   RCX: <i>00000000C0000082</i></div><div class="r" style="top:23.33px">RDX: 0000000000000043   RSI: <i>000000000000000D</i>   RDI: <i>0000000000000007</i></div><div class="r" style="top:47.96px">RIP: FFFFF805DFC254F7   RSP: FFFFEF8A29D0A6F0   RBP: <i>000000000000000D</i></div><div class="r" style="top:72.59px">R8:  000000000000004D   R9:  0000000000000000   R10: 0000000000000000</div><div class="r" style="top:97.22px">R11: 0000000000000010   R12: 0000000000000000   R13: FFFFF805DFC00000</div><div class="r" style="top:121.85px">R14: 0000000000000000   R15: 0000000000000400</div><div class="r" style="top:146.48px">EFLAGS: <i>00040286</i> CF=0 <i>PF=1</i> AF=0 ZF=0 SF=1 TF=0 IF=1 DF=0 OF=0</div></div></div>
<div style="left:1940.00px;top:1046.50px;width:618.00px;height:23.00px;background:#eeeef2;"></div>
<div style="left:1942.30px;top:1048.30px;width:24.80px;height:21.20px;background:#eeeef2;border:2px solid #a49f91;box-sizing:border-box;"><svg style="left:-2px;top:-2px" width="24.8" height="21.2"><path d="M15.3 4.5 V16.7 L9.2 10.6 Z" fill="#000"/></svg></div>
<div style="left:1965.00px;top:1048.30px;width:420.40px;height:21.20px;background:#eeeef2;border:2px solid #a49f91;box-sizing:border-box;"></div>
<div style="left:2530.80px;top:1048.30px;width:25.40px;height:21.20px;background:#eeeef2;border:2px solid #a49f91;box-sizing:border-box;"><svg style="left:-2px;top:-2px" width="25.4" height="21.2"><path d="M9.799999999999999 4.5 V16.7 L15.899999999999999 10.6 Z" fill="#000"/></svg></div>
<div style="left:1.00px;top:1081.00px;width:1240.50px;height:350.00px;background:#a0a0a0;"></div>
<div style="left:2.00px;top:1083.00px;width:1237.50px;height:346.00px;background:#fff;"></div>
<div style="left:2.00px;top:1083.00px;width:1237.50px;height:35.80px;background:#eeeef2;"></div>
<div class="t s" style="left:5.00px;top:1085.59px;font-size:18.5px;line-height:24px;color:#1e1e1e;letter-spacing:0.864px;">Memory 0</div>
<svg style="left:1128px;top:1097px" width="16" height="10"><path d="M1.6 1.4 H14 L7.8 7.6 Z" fill="#1e1e1e"/></svg>
<div style="left:1158.20px;top:1083.20px;width:35.60px;height:35.70px;background:#fff;border:2px solid #000;box-sizing:border-box;"></div>
<svg style="left:1163.65px;top:1089.25px" width="24" height="24" viewBox="-12 -12 24 24"><g fill="none" stroke="#1e1e1e" stroke-width="1.35" stroke-linejoin="round" stroke-linecap="round"><path d="M2.75 -8.35 L8.55 -2.75 L6.35 -1.65 L2.35 2.85 L2.15 6.45 L-6.35 -1.15 L-3.95 -1.65 L0.65 -5.95 Z"/><path d="M-2.15 2.65 L-8.55 8.35"/></g></svg>
<svg style="left:1208px;top:1093px" width="16" height="16"><path d="M1.6 1.6 L14.4 14.4 M14.4 1.6 L1.6 14.4" stroke="#1e1e1e" stroke-width="2" fill="none"/></svg>
<div class="t s" style="left:10.00px;top:1129.01px;font-size:17.3px;line-height:22px;color:#1e1e1e;letter-spacing:-0.057px;">Address:</div>
<div style="left:85.00px;top:1119.20px;width:1155.00px;height:38.40px;background:#fff;border:2px solid #a9acb2;box-sizing:border-box;"></div>
<div class="t s" style="left:90.00px;top:1123.01px;font-size:17.3px;line-height:22px;color:#1e1e1e;letter-spacing:0.237px;">@$scopeip</div>
<div style="left:2.00px;top:1158.00px;width:1212.00px;height:271.00px;background:#fff;overflow:hidden;"><div class="code mem" style="left:10px;top:0;width:1200px"><div class="r" style="top:-3.20px"><b class="a">FFFFF805DFC254A0</b> 20 48 8B 44 24 70 45 33 E4 4D 89 21 45 8B F8 4C <span class="asc"> H.D$pE3?M.!E.?L</span></div><div class="r" style="top:21.45px"><b class="a">FFFFF805DFC254B0</b> 8B EA 4C 89 20 48 85 D2 0F 84 2B 01 00 00 41 8B <span class="asc">.?L. H.?..+...A.</span></div><div class="r" style="top:46.10px"><b class="a">FFFFF805DFC254C0</b> D0 49 8B CD E8 37 34 00 00 84 C0 0F 84 18 01 00 <span class="asc">?I.??74...?.....</span></div><div class="r" style="top:70.75px"><b class="a">FFFFF805DFC254D0</b> 00 41 8D 6C 24 03 41 83 FF 0A 0F 86 F4 00 00 00 <span class="asc">.A.l$.A.?...?...</span></div><div class="r" style="top:95.40px"><b class="a">FFFFF805DFC254E0</b> 8D 7D 07 8D 75 08 66 66 0F 1F 84 00 00 00 00 00 <span class="asc">.}..u.ff........</span></div><div class="r" style="top:120.05px"><b class="a">FFFFF805DFC254F0</b> 8B DD 49 03 DD 8B 0B <u>8B</u> C1 25 FF FF F0 00 3D 4C <span class="asc">.?I.?..<u>.</u>?%???.=L</span></div><div class="r" style="top:144.70px"><b class="a">FFFFF805DFC25500</b> 8D 10 00 0F 85 BC 00 00 00 48 63 43 03 4C 8D 73 <span class="asc">.....?...HcC.L.s</span></div><div class="r" style="top:169.35px"><b class="a">FFFFF805DFC25510</b> 07 48 83 C3 07 4C 03 F0 83 C5 06 83 C6 06 83 C7 <span class="asc">.H.?.L.?.?..?..?</span></div><div class="r" style="top:194.00px"><b class="a">FFFFF805DFC25520</b> 06 80 3B 41 75 30 80 7B 01 FF 75 2A 0F B6 53 02 <span class="asc">..;Au0.{.?u*.?S.</span></div><div class="r" style="top:218.65px"><b class="a">FFFFF805DFC25530</b> 0F B6 C2 24 F0 3C E0 75 1D C1 E9 10 83 C5 03 C0 <span class="asc">.??$?&lt;?u.??..?.?</span></div><div class="r" style="top:243.30px"><b class="a">FFFFF805DFC25540</b> E9 03 83 C6 03 32 CA 83 C7 03 F6 C1 0F 4D 0F 45 <span class="asc">?..?.2?.?.??.M.E</span></div></div></div>
<div style="left:1214.00px;top:1157.00px;width:25.50px;height:272.00px;background:#eeeef2;"></div>
<div style="left:1216.00px;top:1160.30px;width:22.60px;height:25.20px;background:#eeeef2;border:2px solid #a49f91;box-sizing:border-box;"><svg style="left:-2px;top:-2px" width="22.6" height="25.2"><path d="M5.200000000000001 15.6 H17.4 L11.3 9.5 Z" fill="#000"/></svg></div>
<div style="left:1216.00px;top:1360.00px;width:22.60px;height:27.00px;background:#eeeef2;border:2px solid #a49f91;box-sizing:border-box;"></div>
<div style="left:1216.00px;top:1402.00px;width:22.60px;height:26.00px;background:#eeeef2;border:2px solid #a49f91;box-sizing:border-box;"><svg style="left:-2px;top:-2px" width="22.6" height="26"><path d="M5.200000000000001 10.0 H17.4 L11.3 16.1 Z" fill="#000"/></svg></div>
<div class="t s" style="left:10.00px;top:1431.59px;font-size:18.5px;line-height:24px;color:#1e1e1e;letter-spacing:0.155px;">Locals</div>
<div class="t s" style="left:86.00px;top:1431.59px;font-size:18.5px;line-height:24px;color:#1e1e1e;letter-spacing:0.887px;">Watch</div>
<div style="left:152.00px;top:1429.00px;width:109.80px;height:31.60px;background:#fff;border:2px solid #a0a0a0;border-top:none;box-sizing:border-box;"></div>
<div class="t s" style="left:162.00px;top:1431.59px;font-size:18.5px;line-height:24px;color:#1e1e1e;letter-spacing:1.007px;">Memory 0</div>
<div class="t s" style="left:273.00px;top:1431.59px;font-size:18.5px;line-height:24px;color:#1e1e1e;letter-spacing:0.064px;">Threads</div>
<div style="left:1249.50px;top:1081.00px;width:1310.50px;height:350.00px;background:#a0a0a0;"></div>
<div style="left:1251.50px;top:1083.00px;width:1306.50px;height:346.00px;background:#fff;"></div>
<div style="left:1251.50px;top:1083.00px;width:1306.50px;height:37.80px;background:#eeeef2;"></div>
<div class="t s" style="left:1254.70px;top:1085.59px;font-size:18.5px;line-height:24px;color:#1e1e1e;letter-spacing:0.456px;">Breakpoints</div>
<svg style="left:2446.8px;top:1097px" width="16" height="10"><path d="M1.4 1.2 H13.4 L7.4 7.4 Z" fill="#1e1e1e"/></svg>
<svg style="left:2481.90px;top:1089.75px" width="24" height="24" viewBox="-12 -12 24 24"><g fill="none" stroke="#1e1e1e" stroke-width="1.35" stroke-linejoin="round" stroke-linecap="round"><path d="M2.75 -8.35 L8.55 -2.75 L6.35 -1.65 L2.35 2.85 L2.15 6.45 L-6.35 -1.15 L-3.95 -1.65 L0.65 -5.95 Z"/><path d="M-2.15 2.65 L-8.55 8.35"/></g></svg>
<svg style="left:2525.8px;top:1093px" width="16" height="16"><path d="M1.6 1.6 L14.4 14.4 M14.4 1.6 L1.6 14.4" stroke="#1e1e1e" stroke-width="2" fill="none"/></svg>
<div style="left:1251.50px;top:1120.80px;width:1306.50px;height:27.00px;background:#fff;"></div>
<div style="left:1328.50px;top:1120.80px;width:3.00px;height:27.00px;background:#ececf0;"></div>
<div style="left:1778.00px;top:1120.80px;width:3.00px;height:27.00px;background:#ececf0;"></div>
<div style="left:1853.00px;top:1120.80px;width:3.00px;height:27.00px;background:#ececf0;"></div>
<div style="left:2002.20px;top:1120.80px;width:3.00px;height:27.00px;background:#ececf0;"></div>
<div style="left:2108.10px;top:1120.80px;width:3.00px;height:27.00px;background:#ececf0;"></div>
<div style="left:2407.20px;top:1120.80px;width:3.00px;height:27.00px;background:#ececf0;"></div>
<div style="left:1251.50px;top:1147.60px;width:1306.50px;height:3.00px;background:#e2e2e6;"></div>
<div class="t s" style="left:1285.00px;top:1122.51px;font-size:17.3px;line-height:22px;color:#1e1e1e;">Id</div>
<div class="t s" style="left:1520.00px;top:1122.51px;font-size:17.3px;line-height:22px;color:#1e1e1e;letter-spacing:0.611px;">Location</div>
<div class="t s" style="left:1801.00px;top:1122.51px;font-size:17.3px;line-height:22px;color:#1e1e1e;letter-spacing:0.313px;">Line</div>
<div class="t s" style="left:1911.00px;top:1122.51px;font-size:17.3px;line-height:22px;color:#1e1e1e;letter-spacing:0.049px;">Type</div>
<div class="t s" style="left:2019.00px;top:1122.51px;font-size:17.3px;line-height:22px;color:#1e1e1e;letter-spacing:0.596px;">Hit Count</div>
<div class="t s" style="left:2225.00px;top:1122.51px;font-size:17.3px;line-height:22px;color:#1e1e1e;letter-spacing:0.476px;">Function</div>
<div style="left:1253.00px;top:1149.60px;width:1305.00px;height:36.80px;background:#f6f6f6;border-top:2px solid #dcdcdc;border-bottom:2px solid #dcdcdc;box-sizing:border-box;"></div>
<div class="t s" style="left:1271.00px;top:1157.81px;font-size:17.3px;line-height:22px;color:#1e1e1e;">0</div>
<div style="left:1348.00px;top:1158.00px;width:22.00px;height:21.40px;background:#fff;border:2px solid #111;box-sizing:border-box;"><svg style="left:-2px;top:-2px" width="22" height="22"><path d="M4.8 11 L9 15.6 L17.2 4.8" fill="none" stroke="#111" stroke-width="2.8"/></svg></div>
<div style="left:1374.20px;top:1159.00px;width:18.80px;height:18.80px;background:#c8000f;border-radius:50%;border:1px solid #8e0a12;box-sizing:border-box;"></div>
<div class="t s" style="left:1402.40px;top:1157.81px;font-size:17.3px;line-height:22px;color:#1e1e1e;letter-spacing:-0.558px;">0xFFFFF8053000F000</div>
<div class="t s" style="left:1870.20px;top:1157.81px;font-size:17.3px;line-height:22px;color:#1e1e1e;letter-spacing:0.049px;">Hardware Read</div>
<div class="t s" style="left:2021.00px;top:1157.81px;font-size:17.3px;line-height:22px;color:#1e1e1e;">1</div>
<div class="t s" style="left:2125.80px;top:1157.81px;font-size:17.3px;line-height:22px;color:#1e1e1e;letter-spacing:0.147px;">18446735299896733696</div>
<div class="t s" style="left:1270.00px;top:1198.01px;font-size:17.3px;line-height:22px;color:#1e1e1e;">1</div>
<div style="left:1348.00px;top:1198.20px;width:22.00px;height:21.40px;background:#fff;border:2px solid #111;box-sizing:border-box;"><svg style="left:-2px;top:-2px" width="22" height="22"><path d="M4.8 11 L9 15.6 L17.2 4.8" fill="none" stroke="#111" stroke-width="2.8"/></svg></div>
<div style="left:1374.20px;top:1199.20px;width:18.80px;height:18.80px;background:#c8000f;border-radius:50%;border:1px solid #8e0a12;box-sizing:border-box;"></div>
<div class="t s" style="left:1402.40px;top:1198.01px;font-size:17.3px;line-height:22px;color:#1e1e1e;letter-spacing:-0.775px;">0xFFFFF805DFC254F7</div>
<div class="t s" style="left:1871.20px;top:1198.01px;font-size:17.3px;line-height:22px;color:#1e1e1e;letter-spacing:0.273px;">Software</div>
<div class="t s" style="left:2021.00px;top:1198.01px;font-size:17.3px;line-height:22px;color:#1e1e1e;">1</div>
<div style="left:1251.50px;top:1402.50px;width:1306.50px;height:26.50px;background:#eeeef2;"></div>
<div style="left:1254.00px;top:1405.00px;width:25.00px;height:23.00px;background:#eeeef2;border:2px solid #a49f91;box-sizing:border-box;"><svg style="left:-2px;top:-2px" width="25" height="23"><path d="M15.4 5.4 V17.6 L9.3 11.5 Z" fill="#000"/></svg></div>
<div style="left:1277.00px;top:1405.00px;width:788.00px;height:23.00px;background:#eeeef2;border:2px solid #a49f91;box-sizing:border-box;"></div>
<div style="left:2532.00px;top:1405.00px;width:23.40px;height:23.00px;background:#eeeef2;border:2px solid #a49f91;box-sizing:border-box;"><svg style="left:-2px;top:-2px" width="23.4" height="23"><path d="M8.799999999999999 5.4 V17.6 L14.899999999999999 11.5 Z" fill="#000"/></svg></div>
<div class="t s" style="left:1261.00px;top:1431.59px;font-size:18.5px;line-height:24px;color:#1e1e1e;letter-spacing:-0.255px;">Stack</div>
<div style="left:1318.60px;top:1429.00px;width:122.00px;height:31.40px;background:#fff;border:2px solid #a0a0a0;border-top:none;box-sizing:border-box;"></div>
<div class="t s" style="left:1328.00px;top:1431.59px;font-size:18.5px;line-height:24px;color:#1e1e1e;letter-spacing:0.556px;">Breakpoints</div>
<div style="left:0.00px;top:1469.00px;width:2560.00px;height:37.00px;background:#007acc;"></div>
<svg style="left:2390px;top:1426px" width="170" height="80" viewBox="0 0 170 80"><filter id="sh" x="-10%" y="-10%" width="130%" height="130%"><feDropShadow dx="1.2" dy="1.4" stdDeviation="1" flood-color="#000" flood-opacity=".28"/></filter>
<g filter="url(#sh)" opacity=".62"><g stroke="#fff" stroke-width="3" fill="none" transform="translate(31,33.3)">
<path d="M0.00 -4.60 L0.00 -27.60 M0.00 -14.60 L-9.40 -20.00 M0.00 -14.60 L9.40 -20.00 M3.98 -2.30 L23.90 -13.80 M12.64 -7.30 L12.62 -18.14 M12.64 -7.30 L22.02 -1.86 M3.98 2.30 L23.90 13.80 M12.64 7.30 L22.02 1.86 M12.64 7.30 L12.62 18.14 M0.00 4.60 L0.00 27.60 M0.00 14.60 L9.40 20.00 M0.00 14.60 L-9.40 20.00 M-3.98 2.30 L-23.90 13.80 M-12.64 7.30 L-12.62 18.14 M-12.64 7.30 L-22.02 1.86 M-3.98 -2.30 L-23.90 -13.80 M-12.64 -7.30 L-22.02 -1.86 M-12.64 -7.30 L-12.62 -18.14"/>
<path d="M0 -4.8 L4.2 -2.4 V2.4 L0 4.8 L-4.2 2.4 V-2.4 Z" stroke-width="2"/></g>
<text x="64.5" y="50.6" font-size="47" fill="#fff" font-family="Noto Sans CJK SC,sans-serif" font-weight="300" textLength="92" lengthAdjust="spacingAndGlyphs">看雪</text></g>
<path d="M114.4 51.6 H141.8 V71.4 H132 L121.6 78.6 V71.4 H114.4 Z" fill="#404040" stroke="#fff" stroke-width="1.8"/></svg>
</div></body></html>
